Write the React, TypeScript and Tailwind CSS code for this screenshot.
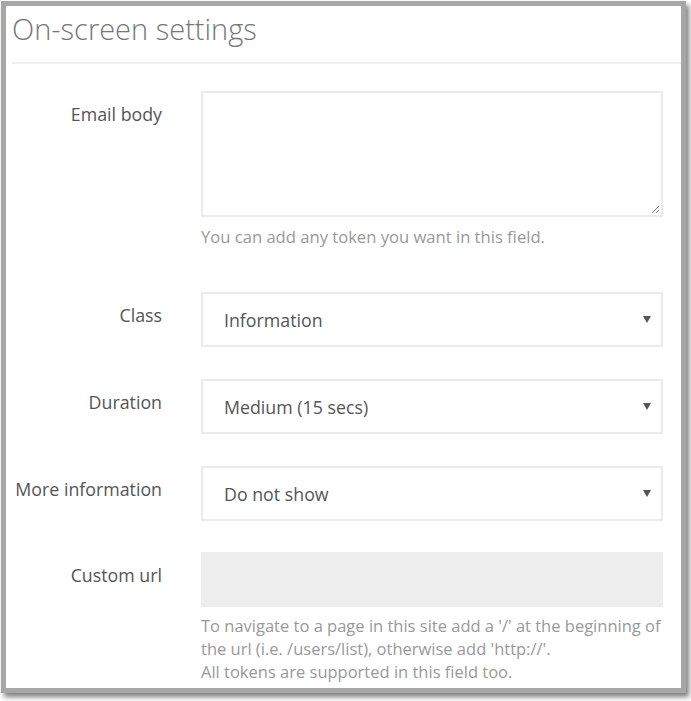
import React from "react";

function Caret() {
  return (
    <svg width="8" height="7" viewBox="0 0 8 7" className="shrink-0">
      <path d="M0 0 L8 0 L4 7 Z" fill="#555" />
    </svg>
  );
}

function SelectBox({ value }: { value: string }) {
  return (
    <div className="flex h-[55px] w-[462px] items-center justify-between border-2 border-[#ebebeb] bg-white pl-[21px] pr-[10px]">
      <span className="pt-[1px] text-[17.8px] text-[#555]">{value}</span>
      <Caret />
    </div>
  );
}

function Row({ label, children, className = "" }: { label: string; children: React.ReactNode; className?: string }) {
  return (
    <div className={"flex gap-[39px] " + className}>
      <div className="w-[156px] shrink-0 pt-[11px] text-right text-[17.8px] leading-[24px] text-[#555]">{label}</div>
      <div className="flex flex-col">{children}</div>
    </div>
  );
}

export default function App() {
  return (
    <div
      className="h-[701px] w-[691px] bg-white pl-[1px] pt-[1px]"
      style={{ fontFamily: '"Open Sans", "Noto Sans", sans-serif' }}
    >
      <div className="h-[692px] w-[685px] border-[5px] border-[#a6a6a6] bg-white shadow-[3px_4px_5px_rgba(0,0,0,0.5)]">
        <div className="ml-[6px] border-b-2 border-[#f0f0f0] pb-[13px] pt-[3px]">
          <h1 className="text-[29px] font-light leading-[40px] text-[#777]">On-screen settings</h1>
        </div>
        <div className="flex flex-col pt-[27px]">
          <Row label="Email body">
            <div className="relative h-[126px] w-[462px] border-2 border-[#ebebeb] bg-white">
              <svg width="10" height="10" viewBox="0 0 10 10" className="absolute bottom-[1px] right-[1px]">
                <path d="M9 2 L2 9 M9 6 L6 9" stroke="#888" strokeWidth="1" />
              </svg>
            </div>
            <p className="mt-[8px] text-[16.6px] leading-[24px] text-[#999]">You can add any token you want in this field.</p>
          </Row>
          <Row label="Class" className="mt-[43px]">
            <SelectBox value="Information" />
          </Row>
          <Row label="Duration" className="mt-[32px]">
            <SelectBox value="Medium (15 secs)" />
          </Row>
          <Row label="More information" className="mt-[32px]">
            <SelectBox value="Do not show" />
          </Row>
          <Row label="Custom url" className="mt-[31px]">
            <div className="h-[55px] w-[462px] bg-[#eeeeee]" />
            <p className="mt-[7px] w-[466px] text-[16.5px] leading-[23px] text-[#999]">
              To navigate to a page in this site add a '/' at the beginning of the url (i.e. /users/list), otherwise add 'http://'.
              <br />
              All tokens are supported in this field too.
            </p>
          </Row>
        </div>
      </div>
    </div>
  );
}
